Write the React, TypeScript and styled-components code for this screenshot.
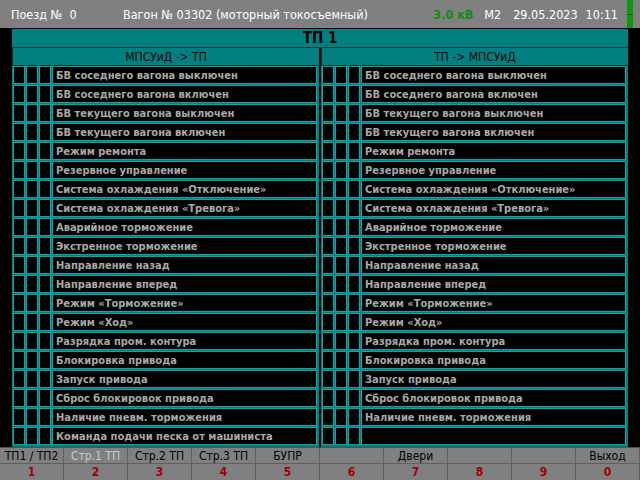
import styled, { createGlobalStyle } from 'styled-components';

const GlobalStyle = createGlobalStyle`
  html, body {
    margin: 0;
    padding: 0;
    background: #000;
  }
  body {
    width: 640px;
    height: 480px;
    overflow: hidden;
    font-family: "DejaVu Sans Condensed", "DejaVu Sans", sans-serif;
    font-stretch: condensed;
  }
`;

const signals = [
  'БВ соседнего вагона выключен',
  'БВ соседнего вагона включен',
  'БВ текущего вагона выключен',
  'БВ текущего вагона включен',
  'Режим ремонта',
  'Резервное управление',
  'Система охлаждения «Отключение»',
  'Система охлаждения «Тревога»',
  'Аварийное торможение',
  'Экстренное торможение',
  'Направление назад',
  'Направление вперед',
  'Режим «Торможение»',
  'Режим «Ход»',
  'Разрядка пром. контура',
  'Блокировка привода',
  'Запуск привода',
  'Сброс блокировок привода',
  'Наличие пневм. торможения',
  'Команда подачи песка от машиниста',
];

const keys = [
  { label: 'ТП1 / ТП2', key: '1' },
  { label: 'Стр.1 ТП', key: '2', active: true },
  { label: 'Стр.2 ТП', key: '3' },
  { label: 'Стр.3 ТП', key: '4' },
  { label: 'БУПР', key: '5' },
  { label: '', key: '6' },
  { label: 'Двери', key: '7' },
  { label: '', key: '8' },
  { label: '', key: '9' },
  { label: 'Выход', key: '0' },
];

const Screen = styled.div`
  width: 640px;
  height: 480px;
  display: flex;
  flex-direction: column;
  background: #000;
`;

const TopBar = styled.div`
  height: 28px;
  flex: none;
  display: flex;
  align-items: center;
  padding-left: 11px;
  background: #808080;
  border-bottom: 1px solid #000;
  color: #fff;
  font-size: 12.5px;
`;

const TrainNo = styled.span`
  width: 112px;
  white-space: pre;
`;

const Wagon = styled.span`
  flex: 1;
  white-space: nowrap;
`;

const Voltage = styled.span`
  color: #138a13;
  font-weight: bold;
`;

const Info = styled.span<{ gap: number }>`
  margin-left: ${({ gap }) => gap}px;
`;

const Lamp = styled.div`
  align-self: stretch;
  width: 6px;
  margin: 0 7px 0 9px;
  display: flex;
  flex-direction: column;
  gap: 1px;
  background: #2a4a2a;

  span {
    flex: 1;
    background: #0a9a0a;
  }
`;

const Middle = styled.div`
  flex: 1;
  display: flex;
  padding: 0 12px;
  min-height: 0;
`;

const Panel = styled.div`
  flex: 1;
  display: flex;
  flex-direction: column;
  background: #008080;
`;

const PanelTitle = styled.div`
  height: 18px;
  flex: none;
  display: flex;
  align-items: center;
  justify-content: center;
  border-bottom: 1px solid #003838;
  font-size: 15px;
  font-weight: bold;
  color: #000;
`;

const Columns = styled.div`
  flex: 1;
  display: grid;
  grid-template-columns: 1fr 1fr;
  gap: 2px;
  background: #000;
`;

const Column = styled.div`
  display: flex;
  flex-direction: column;
  background: #008080;
`;

const ColumnHead = styled.div`
  height: 17px;
  flex: none;
  display: flex;
  align-items: center;
  justify-content: center;
  border-left: 1px solid #003838;
  border-bottom: 1px solid #003838;
  font-size: 12px;
  color: #000;
`;

const Rows = styled.div`
  flex: 1;
  display: flex;
  flex-direction: column;
  gap: 1px;
  padding: 0 2px 1px 1px;
`;

const Row = styled.div`
  height: 18px;
  display: flex;
  gap: 1px;
`;

const Cell = styled.div<{ wide?: boolean }>`
  box-sizing: border-box;
  width: ${({ wide }) => (wide ? 'auto' : '12px')};
  flex: ${({ wide }) => (wide ? '1' : 'none')};
  display: flex;
  align-items: center;
  padding-left: ${({ wide }) => (wide ? '3px' : '0')};
  background: #000;
  border: 1px solid #10a4a4;
  color: #a8a8a8;
  font-size: 11px;
  font-weight: bold;
  white-space: nowrap;
`;

const Footer = styled.div`
  flex: none;
  display: grid;
  grid-template-columns: repeat(10, 64px);
  grid-template-rows: 16px 16px;
  background: #808080;
  border-top: 1px solid #505050;
`;

const KeyLabel = styled.div<{ active?: boolean }>`
  display: flex;
  align-items: center;
  justify-content: center;
  border-right: 1px solid #606060;
  border-bottom: 1px solid #606060;
  font-size: 12px;
  color: ${({ active }) => (active ? '#c8c8c8' : '#000')};
`;

const KeyNum = styled.div`
  display: flex;
  align-items: center;
  justify-content: center;
  border-right: 1px solid #606060;
  font-size: 12px;
  font-weight: bold;
  color: #a00000;
`;

const SignalColumn = ({ title, items }: { title: string; items: string[] }) => (
  <Column>
    <ColumnHead>{title}</ColumnHead>
    <Rows>
      {items.map((text, i) => (
        <Row key={i}>
          <Cell />
          <Cell />
          <Cell />
          <Cell wide>{text}</Cell>
        </Row>
      ))}
    </Rows>
  </Column>
);

export default function App() {
  return (
    <Screen>
      <GlobalStyle />
      <TopBar>
        <TrainNo>Поезд №  0</TrainNo>
        <Wagon>Вагон № 03302 (моторный токосъемный)</Wagon>
        <Voltage>3.0 кВ</Voltage>
        <Info gap={11}>М2</Info>
        <Info gap={12}>29.05.2023</Info>
        <Info gap={8}>10:11</Info>
        <Lamp>
          <span />
          <span />
        </Lamp>
      </TopBar>
      <Middle>
        <Panel>
          <PanelTitle>ТП 1</PanelTitle>
          <Columns>
            <SignalColumn title="МПСУиД -> ТП" items={signals} />
            <SignalColumn title="ТП -> МПСУиД" items={[...signals.slice(0, 19), '']} />
          </Columns>
        </Panel>
      </Middle>
      <Footer>
        {keys.map((k) => (
          <KeyLabel key={'l' + k.key} active={k.active}>
            {k.label}
          </KeyLabel>
        ))}
        {keys.map((k) => (
          <KeyNum key={'n' + k.key}>{k.key}</KeyNum>
        ))}
      </Footer>
    </Screen>
  );
}
